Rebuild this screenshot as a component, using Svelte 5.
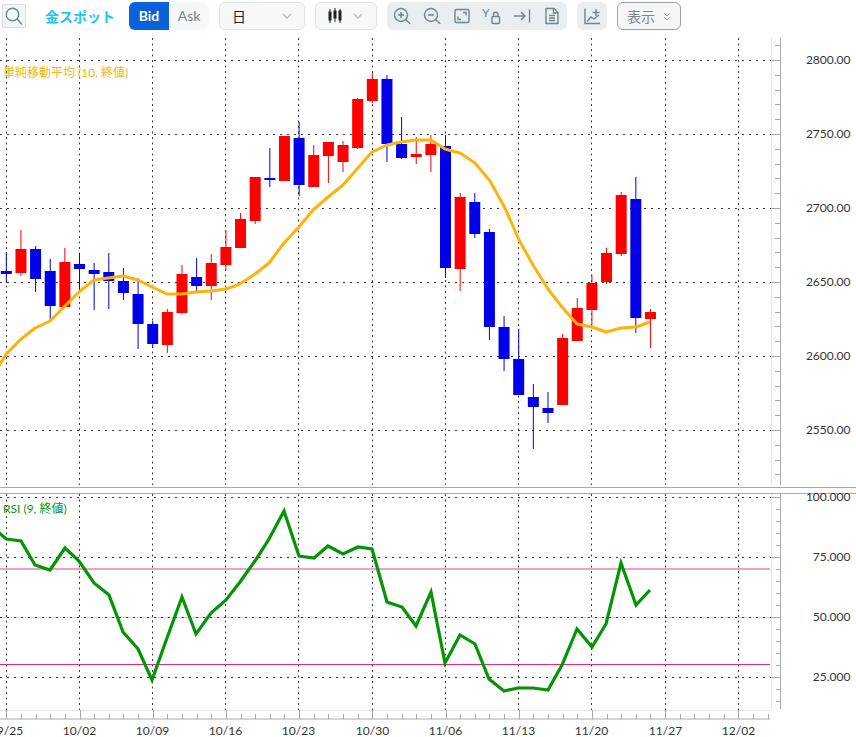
<script>
	const x = (i) => 6.3 + 14.64 * i;

	// [wick top, wick bottom, body top, body bottom, up]
	const candles = [
		[252,283,271,274,0],[230,276,249,273,1],[246,292,249,279,0],[259,320,271,306,0],
		[248,307,262,307,1],[253,293,264,269,0],[263,310,270,274,0],[253,309,272,281,0],
		[268,300,281,293,0],[278,349,294,324,0],[321,348,324,344,0],[309,353,312,345,1],
		[265,314,274,313,1],[258,291,277,286,0],[254,300,263,286,1],[230,270,247,265,1],
		[213,248,219,248,1],[177,224,177,221,1],[148,187,178,180,0],[136,181,136,181,1],
		[122,196,138,185,0],[145,187,155,187,1],[142,183,142,156,1],[141,172,145,162,1],
		[98,149,99,148,1],[73,103,79,101,1],[75,162,79,144,0],[117,159,144,158,0],
		[137,164,154,157,1],[135,172,144,155,1],[135,278,146,268,0],[193,291,197,269,1],
		[193,238,202,234,0],[229,340,232,327,0],[316,371,327,359,0],[329,395,359,395,0],
		[384,449,397,407,0],[392,423,408,413,0],[334,405,338,405,1],[298,341,308,341,1],
		[275,325,283,310,1],[248,284,253,282,1],[192,256,195,254,1],[177,333,199,318,0],
		[309,348,312,319,1]
	];

	const ma = [[-2,367],[6.3,354],[20,340],[35,328],[50,321],[65,306],[79,292],[94,280],[108,278],[123,276],[138,280],[152,287],[167,294],[182,294],[196,292],[211,291],[226,289],[240,284],[255,274],[269,263],[284,243],[299,227],[313,210],[328,197],[343,185],[357,169],[372,152],[387,145],[401,142],[416,140],[431,140],[445,149],[460,153],[475,163],[490,181],[505,208],[519,240],[533,265],[548,289],[562,307],[577,324],[592,327],[606,332],[621,328],[636,327],[650,322]];

	const rsi = [[-2,532],[6.3,539],[21,541],[35,565],[50,570],[65,548],[79,561],[94,583],[109,595],[123,632],[138,649],[152,680],[167,638],[182,597],[196,634],[211,613],[226,600],[240,582],[255,561],[269,539],[284,511],[299,556],[314,558],[328,546],[343,554],[358,547],[372,549],[387,602],[402,607],[416,626],[431,592],[445,663],[460,635],[475,644],[489,679],[504,691],[518,688],[533,688],[548,690],[562,665],[577,629],[592,647],[606,624],[621,563],[636,605],[650,590]];

	const points = (list) => list.map((p) => p.join(',')).join(' ');

	const dates = ['09/25','10/02','10/09','10/16','10/23','10/30','11/06','11/13','11/20','11/27','12/02'];
	const gridX = [6.5,79.5,152.5,225.5,298.5,372.5,445.5,518.5,591.5,665.5,738.5];
	const prices = [[60,'2800.00'],[134,'2750.00'],[208,'2700.00'],[282,'2650.00'],[356,'2600.00'],[430,'2550.00']];
	const levels = [[497,'100.000'],[557,'75.000'],[617,'50.000'],[677,'25.000']];

	const priceTicks = Array.from({ length: 30 }, (_, k) => 45.2 + 14.8 * k);
	const rsiTicks = Array.from({ length: 18 }, (_, k) => 497 + 12 * k);
	const timeTicks = Array.from({ length: 53 }, (_, k) => k);
</script>

<div class="page">
	<div class="toolbar">
		<button class="search" aria-label="検索">
			<svg width="20" height="20" viewBox="0 0 20 20"><circle cx="8.5" cy="8.5" r="6.2" /><path d="M13 13l5 5.500" /></svg>
		</button>
		<span class="title">金スポット</span>
		<div class="side">
			<span class="bid">Bid</span>
			<span class="ask">Ask</span>
		</div>
		<div class="select period">
			<span>日</span>
			<svg class="chev" width="10" height="6" viewBox="0 0 10 6"><path d="M1 1l4 4 4-4" /></svg>
		</div>
		<div class="select kind">
			<svg width="14" height="16" viewBox="0 0 14 16" class="bars">
				<path d="M2 1v14M7 0v14M12 1v14" />
				<rect x="1" y="4" width="2" height="8" />
				<rect x="6" y="3" width="2" height="7" />
				<rect x="11" y="3" width="2" height="9" />
			</svg>
			<svg class="chev" width="10" height="6" viewBox="0 0 10 6"><path d="M1 1l4 4 4-4" /></svg>
		</div>
		<div class="group">
			<span class="tool"><svg width="20" height="20" viewBox="0 0 20 20"><circle cx="9" cy="9" r="6.5" /><path d="M6 9h6M9 6v6M13.7 13.7l4.500 4" /></svg></span>
			<span class="tool"><svg width="20" height="20" viewBox="0 0 20 20"><circle cx="9" cy="9" r="6.5" /><path d="M6 9h6M13.7 13.7l4.500 4" /></svg></span>
			<span class="tool"><svg width="20" height="20" viewBox="0 0 20 20"><rect x="3" y="3.500" width="14" height="13" rx="1.500" /><path d="M11 6.500h3v3M6 10.500v3h3" /></svg></span>
			<span class="tool"><svg width="20" height="20" viewBox="0 0 20 20"><text x="0" y="11" class="ylabel">Y</text><rect x="10" y="10.500" width="7.500" height="7" rx="1" /><path d="M11.500 10.500V8.500a2.200 2.200 0 0 1 4.500 0v2" /></svg></span>
			<span class="tool"><svg width="20" height="20" viewBox="0 0 20 20"><path d="M2 10h11M9 6l4 4-4 4M17.500 3.500v13" /></svg></span>
			<span class="tool"><svg width="20" height="20" viewBox="0 0 20 20"><path d="M4 2.500h8l4 4v11H4zM11.500 2.500v4.500h4.500M7 9.500h6M7 12h6M7 14.500h6" /></svg></span>
		</div>
		<div class="group single">
			<span class="tool"><svg width="20" height="20" viewBox="0 0 20 20"><path d="M3 2.500v15h15M5 15.500l4-4.500 3 2 5-4M14 3v7M10.500 6.500h7" /></svg></span>
		</div>
		<div class="display">
			<span>表示</span>
			<svg width="8" height="9" viewBox="0 0 8 9"><path d="M1 1l3 3 3-3M1 5l3 3 3-3" /></svg>
		</div>
	</div>

	<svg class="chart" width="856" height="705" viewBox="0 32 856 705">
		<!-- grid -->
		{#each gridX as gx}
			<line class="grid vertical" x1={gx} x2={gx} y1="38" y2="485" />
			<line class="grid vertical" x1={gx} x2={gx} y1="494" y2="710" />
		{/each}
		{#each prices as [y]}
			<line class="grid" x1="0" x2="771" y1={y + 0.5} y2={y + 0.5} />
		{/each}
		<line class="soft" x1="0" x2="771" y1="617.500" y2="617.500" />
		{#each levels as [y]}
			<line class="grid" x1="0" x2="771" y1={y + 0.5} y2={y + 0.5} />
		{/each}

		<!-- price pane -->
		{#each candles as [top, bottom, open, close, up], i}
			<rect x={x(i) - 0.5} y={top} width="1" height={bottom - top} fill={up ? '#ff0000' : '#0000e0'} />
			<rect x={x(i) - 5.5} y={open} width="11" height={close - open} fill={up ? '#ff0000' : '#0000e6'} />
		{/each}
		<polyline class="ma" points={points(ma)} />
		<text class="legend ma-label" x="3" y="77">単純移動平均 (10, 終値)</text>

		<!-- rsi pane -->
		<line class="band upper" x1="0" x2="770" y1="569" y2="569" />
		<line class="band lower" x1="0" x2="770" y1="664.500" y2="664.500" />
		<polyline class="rsi" points={points(rsi)} />
		<text class="legend rsi-label" x="3" y="513">RSI (9, 終値)</text>

		<!-- axes -->
		<line class="pale" x1="771.500" x2="771.500" y1="38" y2="485" />
		<line class="pale" x1="771.500" x2="771.500" y1="494" y2="709" />
		<line class="axis" x1="780.500" x2="780.500" y1="38" y2="485" />
		<line class="axis" x1="780.500" x2="780.500" y1="494" y2="709" />
		{#each priceTicks as y, k}
			<line class="axis" x1={(k + 4) % 5 === 0 ? 771 : 775} x2="780" y1={Math.round(y) + 0.5} y2={Math.round(y) + 0.5} />
		{/each}
		{#each rsiTicks as y, k}
			<line class="axis" x1={k % 5 === 0 ? 771 : 776} x2="780" y1={y + 0.5} y2={y + 0.5} />
		{/each}
		<line class="pale" x1="0" x2="771" y1="710.500" y2="710.500" />
		<line class="axis" x1="0" x2="770" y1="719" y2="719" />
		{#each timeTicks as k}
			<line class="axis" x1={Math.round(x(k)) + 0.5} x2={Math.round(x(k)) + 0.5} y1={k % 5 === 0 ? 710 : 714} y2="719" />
		{/each}

		<line class="divider" x1="0" x2="856" y1="487.500" y2="487.500" />
		<line class="divider" x1="0" x2="856" y1="493.500" y2="493.500" />

		<!-- labels -->
		{#each prices as [y, label]}
			<text class="label" x="850.500" y={y + 3.5} text-anchor="end">{label}</text>
		{/each}
		{#each levels as [y, label]}
			<text class="label" x="850.500" y={y + 3.5} text-anchor="end">{label}</text>
		{/each}
		{#each dates as date, k}
			<text class="label" x={gridX[k]} y="735" text-anchor="middle">{date}</text>
		{/each}
	</svg>
</div>

<style>
:global(body) {
	margin: 0;
	background: #fff;
}

.page {
	width: 856px;
	height: 737px;
	overflow: hidden;
	font-family: Lato, "Noto Sans CJK JP", sans-serif;
}

.toolbar {
	height: 32px;
	box-sizing: border-box;
	padding: 2px 0 2px 2px;
	display: flex;
	align-items: center;
	gap: 10px;
}

.toolbar svg {
	fill: none;
	stroke: #6f8790;
	stroke-width: 1.4;
}

.search {
	width: 24px;
	height: 24px;
	padding: 0;
	display: flex;
	align-items: center;
	justify-content: center;
	background: #f3f6f7;
	border: 1px solid #d5dde0;
	border-radius: 2px;
}

.title {
	width: 70px;
	margin: 0 4px 0 9px;
	font-size: 14px;
	font-weight: 700;
	color: #1cc4fb;
	white-space: nowrap;
}

.side {
	display: flex;
	height: 28px;
	width: 80px;
	font-size: 14px;
	line-height: 28px;
	text-align: center;
}

.bid {
	flex: 1;
	background: #0b61d9;
	color: #fff;
	font-weight: 700;
	border-radius: 6px 0 0 6px;
}

.ask {
	flex: 1;
	background: #f5f7f8;
	color: #75838f;
	border-radius: 0 6px 6px 0;
}

.select {
	height: 28px;
	box-sizing: border-box;
	display: flex;
	align-items: center;
	justify-content: space-between;
	background: #f7f9f9;
	border: 1px solid #dde5e7;
	border-radius: 6px;
}

.period {
	width: 86px;
	padding: 0 12px 0 12px;
	font-size: 14px;
	color: #222;
}

.kind {
	width: 62px;
	padding: 0 13px 0 12px;
}

.toolbar .chev {
	stroke: #b4bfc4;
}

.toolbar .bars {
	stroke: #222;
	stroke-width: 1;
	fill: #222;
}

.group {
	height: 28px;
	display: flex;
	background: #e9eef0;
	border-radius: 6px;
}

.tool {
	width: 30px;
	display: flex;
	align-items: center;
	justify-content: center;
}

.toolbar .ylabel {
	font-size: 12px;
	fill: #6f8790;
	stroke: none;
}

.display {
	width: 64px;
	height: 28px;
	box-sizing: border-box;
	padding-left: 9px;
	display: flex;
	align-items: center;
	gap: 8px;
	font-size: 14px;
	color: #7f8689;
	background: #f4f6f7;
	border: 1px solid #9ca2a5;
	border-radius: 6px;
}

.toolbar .display svg {
	stroke: #9aa2a6;
	stroke-width: 1;
}

.chart {
	display: block;
}

.grid {
	stroke: #3a3a3a;
	stroke-width: 1;
	stroke-dasharray: 2 5;
}

.vertical {
	stroke-dasharray: 2 3.500;
}

.soft {
	stroke: #cfcfcf;
	stroke-width: 1;
}

.ma {
	fill: none;
	stroke: #ffb30a;
	stroke-width: 3;
	stroke-linejoin: round;
}

.rsi {
	fill: none;
	stroke: #059405;
	stroke-width: 3.200;
}

.band {
	stroke-width: 1;
}

.upper {
	stroke: #f07fae;
	stroke-width: 1.600;
}

.lower {
	stroke: #f0257f;
}

.axis {
	stroke: #a8a8a8;
	stroke-width: 1;
}

.pale {
	stroke: #e6e6e6;
	stroke-width: 1;
}

.divider {
	stroke: #aaa;
	stroke-width: 1;
}

.label {
	font-size: 12px;
	fill: #333;
}

.legend {
	font-size: 12px;
}

.ma-label {
	fill: #ffb30a;
}

.rsi-label {
	fill: #0a960a;
}
</style>
